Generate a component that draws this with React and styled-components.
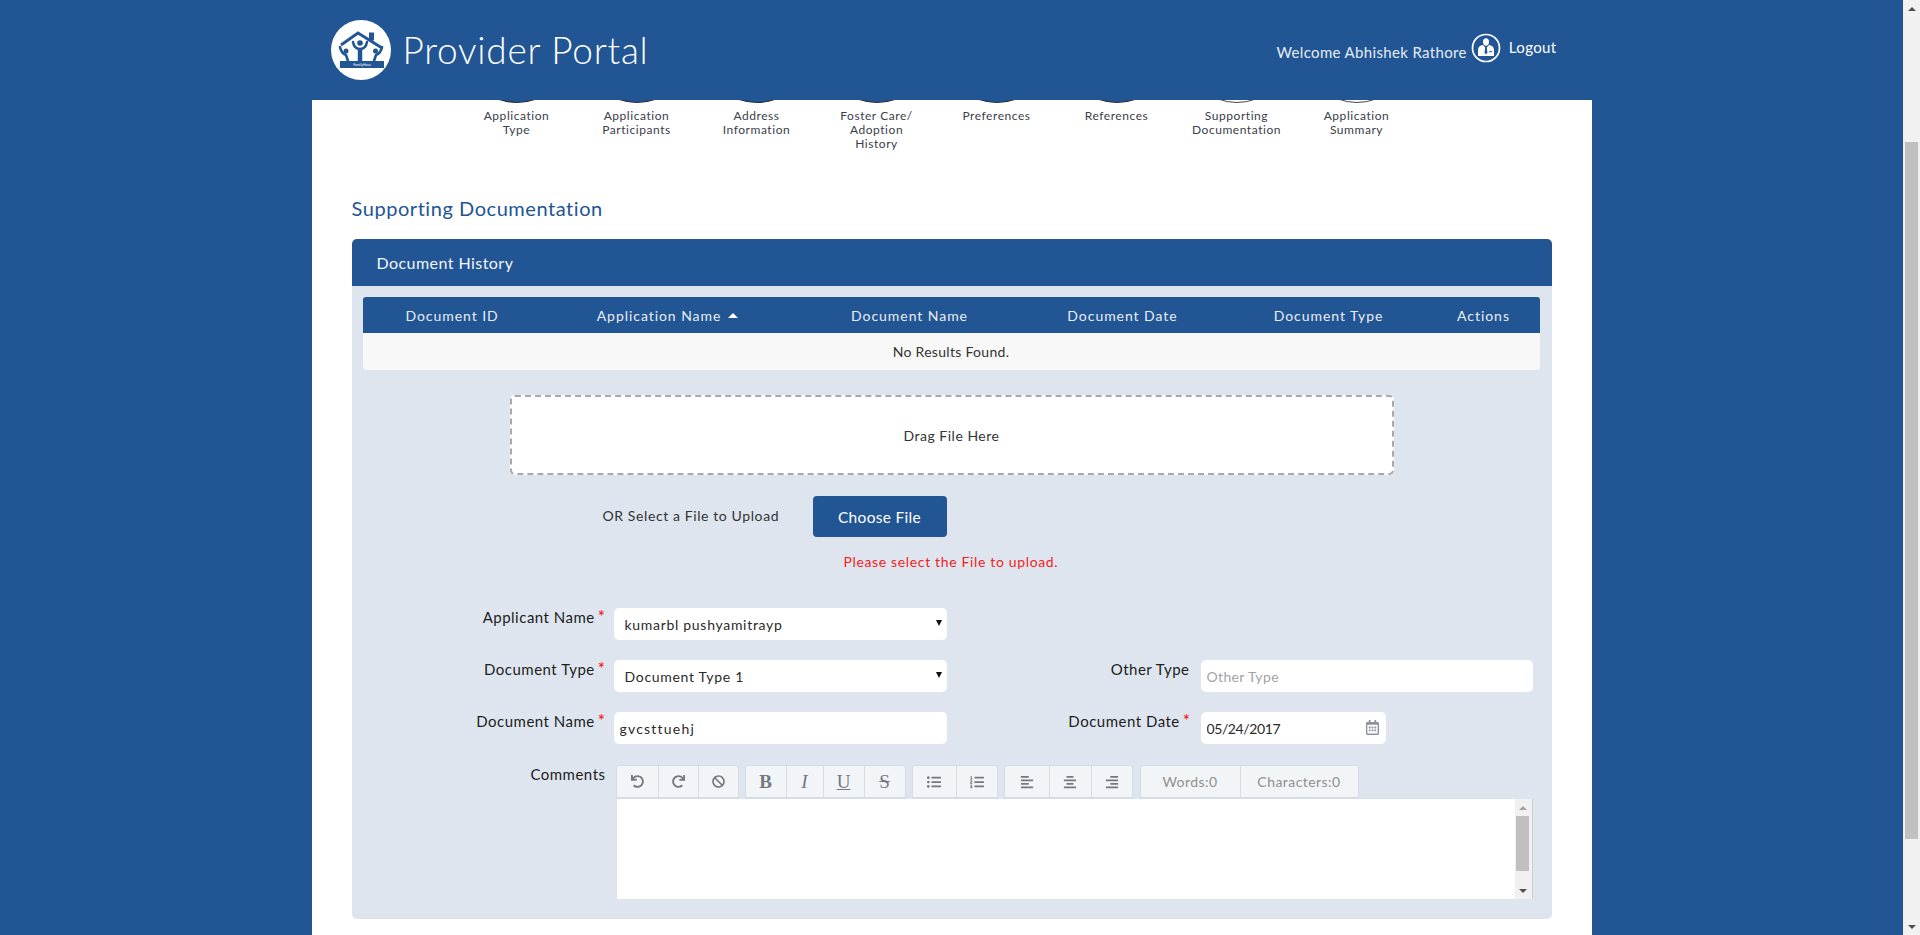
import React from 'react';
import styled, { createGlobalStyle } from 'styled-components';
import {
  FaUndo, FaRedo, FaBan, FaListUl, FaListOl, FaAlignLeft, FaAlignCenter, FaAlignRight, FaRegCalendarAlt,
} from 'react-icons/fa';

const BLUE = '#215594';
const FONT = '"Lato", "Open Sans", sans-serif';

const GlobalStyle = createGlobalStyle`
  html, body { margin: 0; padding: 0; height: 100%; overflow: hidden; }
  body { font-family: ${FONT}; color: #2a2a2a; }
  * { box-sizing: border-box; }
`;

const Page = styled.div`
  display: flex;
  height: 935px;
  overflow: hidden;
  background: ${BLUE};
`;

const Viewport = styled.div`
  flex: 1;
  display: flex;
  justify-content: center;
`;

const Shell = styled.div`
  width: 1280px;
  height: 935px;
  background: #fff;
`;

const Header = styled.header`
  height: 100px;
  background: ${BLUE};
  color: #fff;
  display: flex;
  padding: 20px 35px 0 19px;
`;

const Brand = styled.div`
  display: flex;
  align-items: flex-start;
  gap: 12px;
  flex: 1;
`;

const BrandName = styled.div`
  font-size: 37px;
  font-weight: 300;
  letter-spacing: 0.75px;
  line-height: 60px;
`;

const UserArea = styled.div`
  display: flex;
  align-items: flex-start;
  font-size: 15px;
  letter-spacing: 0.35px;
  padding-top: 13px;
`;

const Welcome = styled.span`
  line-height: 18px;
  margin-top: 10px;
  color: #e6ecf4;
`;

const Logout = styled.span`
  line-height: 18px;
  margin: 5px 0 0 8px;
`;

const Steps = styled.div`
  display: flex;
  height: 96px;
  padding-left: 145px;
`;

const Step = styled.div`
  width: 120px;
  display: flex;
  flex-direction: column;
  align-items: center;
  text-align: center;
  font-size: 12px;
  font-weight: 400;
  line-height: 14px;
  letter-spacing: 0.55px;
  color: #3a404b;
`;

const StepArc = styled.svg`
  display: block;
  margin-bottom: 5px;
`;

const StepName = styled.div`
  white-space: pre-line;
`;

const Content = styled.main`
  padding: 0 40px 0 40px;
`;

const PageTitle = styled.h2`
  margin: 0 0 19px 0;
  font-size: 20px;
  line-height: 24px;
  font-weight: 400;
  letter-spacing: 0.55px;
  color: ${BLUE};
`;

const Panel = styled.section`
  border-radius: 5px;
  overflow: hidden;
  background: #dee5ef;
  padding-bottom: 20px;
`;

const PanelHead = styled.div`
  height: 47px;
  background: ${BLUE};
  color: #f3f6fa;
  font-size: 16px;
  letter-spacing: 0.45px;
  line-height: 47px;
  padding-left: 25px;
`;

const Table = styled.div`
  margin: 11px 12px 0 11px;
  border-radius: 3px;
  overflow: hidden;
`;

const TableHead = styled.div`
  display: grid;
  grid-template-columns: 179px 252px 232px 194px 218px 92px;
  padding-right: 10px;
  height: 36px;
  background: ${BLUE};
  color: #e9eef5;
  font-size: 14px;
  letter-spacing: 0.95px;
`;

const HeadCell = styled.div`
  display: flex;
  align-items: center;
  justify-content: center;
  gap: 7px;
`;

const SortArrow = styled.span`
  width: 0;
  height: 0;
  border-left: 5px solid transparent;
  border-right: 5px solid transparent;
  border-bottom: 5px solid #fff;
`;

const EmptyRow = styled.div`
  height: 37px;
  background: #f8f8f8;
  text-align: center;
  line-height: 37px;
  font-size: 14px;
  letter-spacing: 0.3px;
  color: #333;
`;

const DropZone = styled.div`
  margin: 25px 0 0 158px;
  width: 884px;
  height: 80px;
  background: #fff;
  border: 2px dashed #a9a9ad;
  border-radius: 5px;
  display: flex;
  align-items: center;
  justify-content: center;
  font-size: 14px;
  letter-spacing: 0.5px;
  color: #333;
`;

const UploadRow = styled.div`
  display: flex;
  align-items: center;
  margin: 21px 0 0 251px;
  font-size: 14px;
  letter-spacing: 0.6px;
  color: #333;
`;

const UploadLabel = styled.span`
  width: 210px;
  margin-top: -2px;
`;

const ChooseButton = styled.button`
  width: 134px;
  height: 41px;
  border: 0;
  border-radius: 4px;
  background: ${BLUE};
  color: #fff;
  font: 15.5px ${FONT};
  letter-spacing: 0.3px;
`;

const ErrorText = styled.div`
  margin: 16px 0 0 492px;
  height: 18px;
  line-height: 18px;
  color: #f51c20;
  font-size: 14px;
  letter-spacing: 0.65px;
`;

const FormRow = styled.div`
  display: flex;
  margin-top: ${(p) => p.$top || 20}px;
`;

const FieldLabel = styled.label`
  width: ${(p) => p.$width}px;
  flex: none;
  text-align: right;
  font-size: 15px;
  line-height: 18px;
  letter-spacing: 0.5px;
  color: #1d1d1d;
`;

const Required = styled.span`
  color: #f00;
  margin-left: 3px;
  font-size: 17px;
  line-height: 14px;
`;

const SelectWrap = styled.div`
  position: relative;
  width: 333px;
  margin-left: 8px;

  &::after {
    content: '';
    position: absolute;
    right: 5px;
    top: 12px;
    border-left: 3.5px solid transparent;
    border-right: 3.5px solid transparent;
    border-top: 6px solid #111;
    pointer-events: none;
  }
`;

const Select = styled.select`
  appearance: none;
  display: block;
  width: 100%;
  height: 32px;
  border: 0;
  border-radius: 5px;
  background: #fff;
  padding: 1px 0 0 11px;
  font: 14px ${FONT};
  letter-spacing: 0.7px;
  color: #2a2a2a;
`;

const TextInput = styled.input`
  display: block;
  width: ${(p) => p.$width}px;
  height: 32px;
  margin-left: ${(p) => p.$left}px;
  border: 0;
  border-radius: 5px;
  background: #fff;
  padding: 1px 0 0 6px;
  font: 14px ${FONT};
  letter-spacing: ${(p) => p.$spacing}px;
  color: #2a2a2a;

  &::placeholder { color: #a3a3a3; opacity: 1; }
`;

const DateField = styled.div`
  position: relative;
  margin-left: 10px;

  svg {
    position: absolute;
    right: 6px;
    top: 8px;
    color: #8b939d;
  }
`;

const Editor = styled.div`
  width: 917px;
  margin-left: 10px;
`;

const Toolbar = styled.div`
  display: flex;
  height: 34px;
`;

const ToolGroup = styled.div`
  display: flex;
  margin-right: ${(p) => p.$gap}px;
  height: 34px;
  background: #f2f5f8;
  border: 1px solid #d6dce3;
  border-bottom-width: 2px;
  border-radius: 3px 3px 0 0;
`;

const ToolButton = styled.div`
  width: ${(p) => p.$width}px;
  display: flex;
  align-items: center;
  justify-content: center;
  color: #72787e;
  font-size: 14px;
  & + & { border-left: 1px solid #d6dce3; }
`;

const SerifGlyph = styled.span`
  font-family: "Liberation Serif", serif;
  font-size: 19px;
  font-weight: ${(p) => (p.$bold ? 700 : 400)};
  font-style: ${(p) => (p.$italic ? 'italic' : 'normal')};
  text-decoration: ${(p) => p.$line || 'none'};
`;

const Counter = styled.span`
  font-size: 14px;
  letter-spacing: 0.45px;
  color: #8f8f8f;
`;

const EditorBody = styled.div`
  height: 100px;
  display: flex;
  justify-content: flex-end;
  background: #fff;
  border-left: 1px solid #dfe3e8;
`;

const ScrollBar = styled.div`
  width: ${(p) => p.$width}px;
  height: ${(p) => p.$height}px;
  flex: none;
  display: flex;
  flex-direction: column;
  align-items: center;
  background: #f1f1f1;
  padding-right: ${(p) => p.$inset || 0}px;
  border-right: ${(p) => (p.$edge ? '1px solid #cfcfcf' : '0')};
`;

const ArrowBox = styled.div`
  height: 17px;
  flex: none;
  display: flex;
  align-items: center;
  justify-content: center;
  margin-top: ${(p) => (p.$end ? 'auto' : '0')};
`;

const ArrowUp = styled.span`
  border-left: 4px solid transparent;
  border-right: 4px solid transparent;
  border-bottom: 4px solid ${(p) => p.$color};
`;

const ArrowDown = styled.span`
  border-left: 4px solid transparent;
  border-right: 4px solid transparent;
  border-top: 4px solid ${(p) => p.$color};
`;

const Thumb = styled.div`
  width: 13px;
  flex: none;
  height: ${(p) => p.$height}px;
  margin-top: ${(p) => p.$top}px;
  background: #c0c0c0;
`;

const steps = [
  { name: 'Application\nType' },
  { name: 'Application\nParticipants' },
  { name: 'Address\nInformation' },
  { name: 'Foster Care/\nAdoption\nHistory' },
  { name: 'Preferences' },
  { name: 'References' },
  { name: 'Supporting\nDocumentation', open: true },
  { name: 'Application\nSummary', open: true },
];

const columns = ['Document ID', 'Application Name', 'Document Name', 'Document Date', 'Document Type', 'Actions'];

const Logo = () => (
  <svg width="60" height="60" viewBox="-30 -30 60 60" aria-hidden="true">
    <circle r="30" fill="#fff" />
    <g fill="none" stroke={BLUE} strokeLinejoin="miter">
      <path d="M-20-5L-3-17 21-2" strokeWidth="2.800" />
      <path d="M-8-8C-7-2-4-1-1-1 2-1 5-2 6-8" strokeWidth="2.500" strokeLinecap="round" />
      <path d="M-1-1V11" strokeWidth="4.500" />
      <path d="M-21-3C-20 2-18 4-15 5L-13 11" strokeWidth="2.600" strokeLinecap="round" />
      <path d="M21-3C20 2 18 4 15 5L13 11" strokeWidth="2.600" strokeLinecap="round" />
    </g>
    <g fill={BLUE}>
      <rect x="8" y="-17.500" width="5" height="8" />
      <circle cx="-1" cy="-7" r="2.800" />
      <circle cx="-15" cy="1" r="2.500" />
      <circle cx="14.500" cy="1" r="2.500" />
      <rect x="-21" y="11" width="44" height="7" />
    </g>
    <text x="1" y="16" textAnchor="middle" fontSize="3.500" fill="#fff" fontFamily="Lato, sans-serif">FamilyHaus</text>
  </svg>
);

const UserBadge = () => (
  <svg width="30" height="30" viewBox="-15 -15 30 30" aria-hidden="true" style={{ margin: '0 0 0 4px' }}>
    <circle r="13.500" fill="none" stroke="#fff" strokeWidth="1.700" />
    <ellipse cy="-6" rx="3" ry="3.700" fill="#fff" />
    <path d="M-8 8v-6c0-3 2-4.500 5-5l3 3.500 3-3.500c3 .5 5 2 5 5v6z" fill="#fff" />
    <path d="M-.8-.5h1.600l.6 5-1.400 2-1.400-2z" fill={BLUE} />
    <rect x="3" y="3.200" width="3.200" height="1" fill={BLUE} />
  </svg>
);

const Arc = ({ open }) => (
  <StepArc width="40" height="4" viewBox="0 0 40 4" aria-hidden="true">
    <path
      d="M1-1Q20 6 39-1"
      fill={open ? '#fff' : BLUE}
      stroke="#2c3038"
      strokeWidth={open ? 0.9 : 1.2}
    />
  </StepArc>
);

const SideScroll = ({ width, height, thumbTop, thumbHeight, upColor, edge, inset }) => (
  <ScrollBar $width={width} $height={height} $edge={edge} $inset={inset}>
    <ArrowBox><ArrowUp $color={upColor} /></ArrowBox>
    <Thumb $top={thumbTop} $height={thumbHeight} />
    <ArrowBox $end><ArrowDown $color="#505050" /></ArrowBox>
  </ScrollBar>
);

const App = () => (
  <Page>
    <GlobalStyle />
    <Viewport>
      <Shell>
        <Header>
          <Brand>
            <Logo />
            <BrandName>Provider Portal</BrandName>
          </Brand>
          <UserArea>
            <Welcome>Welcome Abhishek Rathore</Welcome>
            <UserBadge />
            <Logout>Logout</Logout>
          </UserArea>
        </Header>

        <Steps>
          {steps.map((s) => (
            <Step key={s.name}>
              <Arc open={s.open} />
              <StepName>{s.name}</StepName>
            </Step>
          ))}
        </Steps>

        <Content>
          <PageTitle>Supporting Documentation</PageTitle>
          <Panel>
            <PanelHead>Document History</PanelHead>
            <Table>
              <TableHead>
                {columns.map((c) => (
                  <HeadCell key={c}>
                    {c}
                    {c === 'Application Name' && <SortArrow />}
                  </HeadCell>
                ))}
              </TableHead>
              <EmptyRow>No Results Found.</EmptyRow>
            </Table>

            <DropZone>Drag File Here</DropZone>
            <UploadRow>
              <UploadLabel>OR Select a File to Upload</UploadLabel>
              <ChooseButton type="button">Choose File</ChooseButton>
            </UploadRow>
            <ErrorText>Please select the File to upload.</ErrorText>

            <FormRow $top={37}>
              <FieldLabel $width={254}>Applicant Name<Required>*</Required></FieldLabel>
              <SelectWrap>
                <Select defaultValue="kumarbl pushyamitrayp">
                  <option>kumarbl pushyamitrayp</option>
                </Select>
              </SelectWrap>
            </FormRow>
            <FormRow>
              <FieldLabel $width={254}>Document Type<Required>*</Required></FieldLabel>
              <SelectWrap>
                <Select defaultValue="Document Type 1">
                  <option>Document Type 1</option>
                </Select>
              </SelectWrap>
              <FieldLabel $width={243}>Other Type</FieldLabel>
              <TextInput $width={332} $left={11} $spacing={0.35} placeholder="Other Type" readOnly />
            </FormRow>
            <FormRow>
              <FieldLabel $width={254}>Document Name<Required>*</Required></FieldLabel>
              <TextInput $width={333} $left={8} $spacing={1.2} value="gvcsttuehj" readOnly />
              <FieldLabel $width={244}>Document Date<Required>*</Required></FieldLabel>
              <DateField>
                <TextInput $width={185} $left={0} $spacing={-0.4} value="05/24/2017" readOnly />
                <FaRegCalendarAlt size={15} />
              </DateField>
            </FormRow>
            <FormRow $top={21}>
              <FieldLabel $width={254}>Comments</FieldLabel>
              <Editor>
                <Toolbar>
                  <ToolGroup $gap={6}>
                    <ToolButton $width={41}><FaUndo size={13} /></ToolButton>
                    <ToolButton $width={40}><FaRedo size={13} /></ToolButton>
                    <ToolButton $width={40}><FaBan size={13} /></ToolButton>
                  </ToolGroup>
                  <ToolGroup $gap={6}>
                    <ToolButton $width={40}><SerifGlyph $bold>B</SerifGlyph></ToolButton>
                    <ToolButton $width={37}><SerifGlyph $italic>I</SerifGlyph></ToolButton>
                    <ToolButton $width={41}><SerifGlyph $line="underline">U</SerifGlyph></ToolButton>
                    <ToolButton $width={41}><SerifGlyph $line="line-through">S</SerifGlyph></ToolButton>
                  </ToolGroup>
                  <ToolGroup $gap={6}>
                    <ToolButton $width={43}><FaListUl size={14} /></ToolButton>
                    <ToolButton $width={41}><FaListOl size={14} /></ToolButton>
                  </ToolGroup>
                  <ToolGroup $gap={7}>
                    <ToolButton $width={44}><FaAlignLeft size={14} /></ToolButton>
                    <ToolButton $width={42}><FaAlignCenter size={14} /></ToolButton>
                    <ToolButton $width={41}><FaAlignRight size={14} /></ToolButton>
                  </ToolGroup>
                  <ToolGroup $gap={0}>
                    <ToolButton $width={99}><Counter>Words:0</Counter></ToolButton>
                    <ToolButton $width={118}><Counter>Characters:0</Counter></ToolButton>
                  </ToolGroup>
                </Toolbar>
                <EditorBody>
                  <SideScroll width={18} height={100} thumbTop={0} thumbHeight={55} upColor="#a3a3a3" edge inset={1} />
                </EditorBody>
              </Editor>
            </FormRow>
          </Panel>
        </Content>
      </Shell>
    </Viewport>
    <SideScroll width={17} height={935} thumbTop={125} thumbHeight={697} upColor="#505050" />
  </Page>
);

export default App;
